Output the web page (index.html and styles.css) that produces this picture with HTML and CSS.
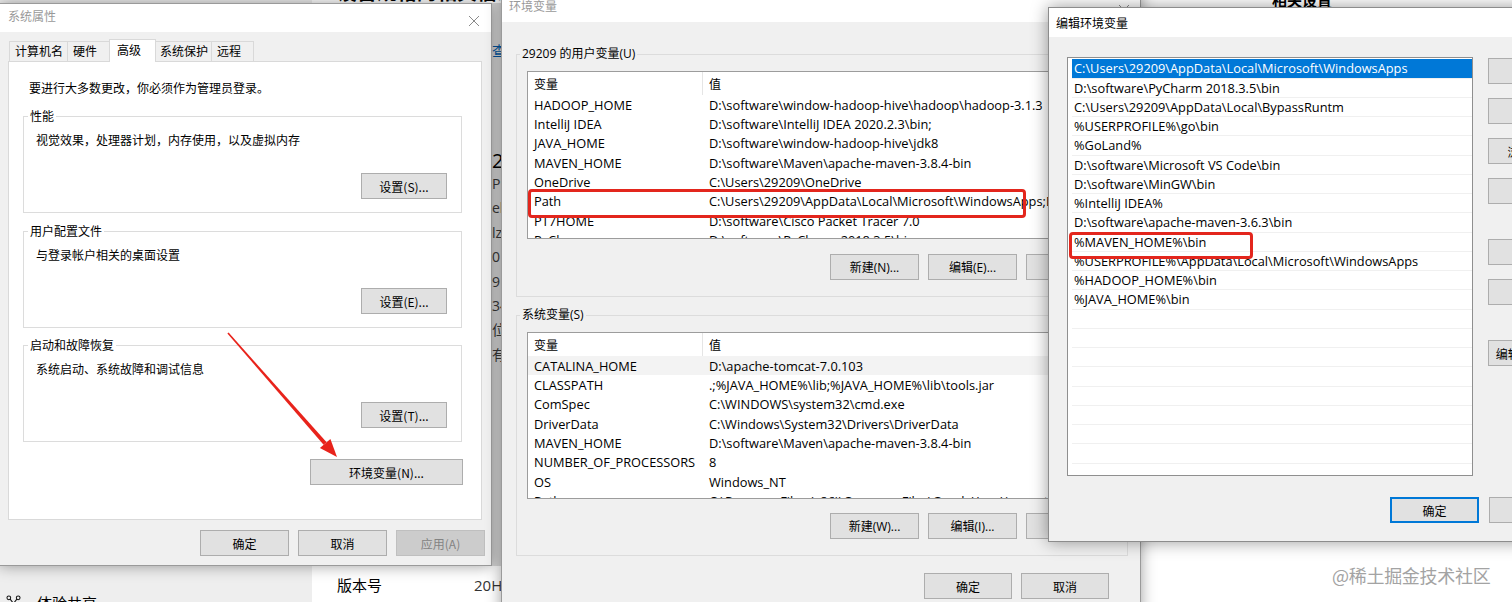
FILE: index.html
```html
<!DOCTYPE html>
<html lang="zh-CN">
<head>
<meta charset="utf-8">
<title>环境变量</title>
<link rel="stylesheet" href="styles.css">
</head>
<body>
<div class="desktop">
  <aside class="nav">
    <div class="nav-item">
      <svg class="nav-icon" viewBox="0 0 16 16"><circle cx="3" cy="3" r="2"/><circle cx="13" cy="3" r="2"/><path d="M4.4 4.4L8 9M11.6 4.4L8 9M8 9V13"/><circle cx="8" cy="15" r="2"/></svg>
      <span>体验共享</span>
    </div>
  </aside>

  <main class="settings">
    <div class="settings-main">
      <h1 class="settings-heading">设备规格的相关信息</h1>
      <div class="frag frag-link">查看</div>
      <div class="frag frag-big">2</div>
      <ul class="frag frag-list">
        <li>P</li><li>el</li><li>lz</li><li>0</li><li>9</li><li>34</li><li>位</li><li>有</li>
      </ul>
      <div class="spec-row"><span class="spec-label">版本号</span><span class="spec-value">20H2</span></div>
    </div>
    <div class="settings-side">
      <h2 class="side-heading">相关设置</h2>
    </div>
  </main>

  <!-- 系统属性 -->
  <section class="win win-sys">
    <header class="titlebar">
      <span class="title">系统属性</span>
      <svg class="close-icon" viewBox="0 0 10 10"><path d="M0 0L10 10M10 0L0 10"/></svg>
    </header>
    <div class="tabs">
      <span class="tab tab-name">计算机名</span>
      <span class="tab tab-hw">硬件</span>
      <span class="tab tab-adv tab-active">高级</span>
      <span class="tab tab-prot">系统保护</span>
      <span class="tab tab-remote">远程</span>
    </div>
    <div class="tab-panel">
      <p class="notice">要进行大多数更改，你必须作为管理员登录。</p>
      <fieldset class="group group-first">
        <legend>性能</legend>
        <p>视觉效果，处理器计划，内存使用，以及虚拟内存</p>
        <div class="group-actions"><button class="btn btn-set">设置(S)...</button></div>
      </fieldset>
      <fieldset class="group group-second">
        <legend>用户配置文件</legend>
        <p>与登录帐户相关的桌面设置</p>
        <div class="group-actions"><button class="btn btn-set">设置(E)...</button></div>
      </fieldset>
      <fieldset class="group group-third">
        <legend>启动和故障恢复</legend>
        <p>系统启动、系统故障和调试信息</p>
        <div class="group-actions"><button class="btn btn-set">设置(T)...</button></div>
      </fieldset>
      <div class="panel-actions"><button class="btn btn-env">环境变量(N)...</button></div>
    </div>
    <div class="dialog-actions sys-actions">
      <button class="btn">确定</button>
      <button class="btn">取消</button>
      <button class="btn" disabled>应用(A)</button>
    </div>
  </section>

  <!-- 环境变量 -->
  <section class="win win-env">
    <header class="titlebar titlebar-env">
      <span class="title">环境变量</span>
      <svg class="close-icon" viewBox="0 0 10 10"><path d="M0 0L10 10M10 0L0 10"/></svg>
    </header>
    <div class="env-body">
      <fieldset class="group env-group env-group-user">
        <legend>29209 的用户变量(U)</legend>
        <div class="list list-user">
          <div class="list-head"><span class="col-name">变量</span><span class="col-value">值</span></div>
          <div class="list-row"><span class="col-name">HADOOP_HOME</span><span class="col-value">D:\software\window-hadoop-hive\hadoop\hadoop-3.1.3</span></div>
          <div class="list-row"><span class="col-name">IntelliJ IDEA</span><span class="col-value">D:\software\IntelliJ IDEA 2020.2.3\bin;</span></div>
          <div class="list-row"><span class="col-name">JAVA_HOME</span><span class="col-value">D:\software\window-hadoop-hive\jdk8</span></div>
          <div class="list-row"><span class="col-name">MAVEN_HOME</span><span class="col-value">D:\software\Maven\apache-maven-3.8.4-bin</span></div>
          <div class="list-row"><span class="col-name">OneDrive</span><span class="col-value">C:\Users\29209\OneDrive</span></div>
          <div class="list-row row-marked"><span class="col-name">Path</span><span class="col-value">C:\Users\29209\AppData\Local\Microsoft\WindowsApps;D:\software\PyCharm 2018.3.5\bin;</span></div>
          <div class="list-row"><span class="col-name">PT7HOME</span><span class="col-value">D:\software\Cisco Packet Tracer 7.0</span></div>
          <div class="list-row"><span class="col-name">PyCharm</span><span class="col-value">D:\software\PyCharm 2018.3.5\bin;</span></div>
        </div>
        <div class="group-buttons">
          <button class="btn">新建(N)...</button>
          <button class="btn">编辑(E)...</button>
          <button class="btn">删除(D)</button>
        </div>
      </fieldset>
      <fieldset class="group env-group env-group-sys">
        <legend>系统变量(S)</legend>
        <div class="list list-sys">
          <div class="list-head"><span class="col-name">变量</span><span class="col-value">值</span></div>
          <div class="list-row row-hover"><span class="col-name">CATALINA_HOME</span><span class="col-value">D:\apache-tomcat-7.0.103</span></div>
          <div class="list-row"><span class="col-name">CLASSPATH</span><span class="col-value">.;%JAVA_HOME%\lib;%JAVA_HOME%\lib\tools.jar</span></div>
          <div class="list-row"><span class="col-name">ComSpec</span><span class="col-value">C:\WINDOWS\system32\cmd.exe</span></div>
          <div class="list-row"><span class="col-name">DriverData</span><span class="col-value">C:\Windows\System32\Drivers\DriverData</span></div>
          <div class="list-row"><span class="col-name">MAVEN_HOME</span><span class="col-value">D:\software\Maven\apache-maven-3.8.4-bin</span></div>
          <div class="list-row"><span class="col-name">NUMBER_OF_PROCESSORS</span><span class="col-value">8</span></div>
          <div class="list-row"><span class="col-name">OS</span><span class="col-value">Windows_NT</span></div>
          <div class="list-row"><span class="col-name">Path</span><span class="col-value">C:\Program Files (x86)\Common Files\Oracle\Java\javapath;</span></div>
        </div>
        <div class="group-buttons group-buttons-sys">
          <button class="btn">新建(W)...</button>
          <button class="btn">编辑(I)...</button>
          <button class="btn">删除(L)</button>
        </div>
      </fieldset>
      <div class="dialog-actions env-actions">
        <button class="btn btn-env-ok">确定</button>
        <button class="btn">取消</button>
      </div>
    </div>
  </section>

  <!-- 编辑环境变量 -->
  <section class="win win-edit">
    <header class="titlebar titlebar-edit">
      <span class="title">编辑环境变量</span>
    </header>
    <div class="edit-body">
      <div class="edit-main">
        <div class="edit-list">
          <div class="edit-row selected">C:\Users\29209\AppData\Local\Microsoft\WindowsApps</div>
          <div class="edit-row">D:\software\PyCharm 2018.3.5\bin</div>
          <div class="edit-row">C:\Users\29209\AppData\Local\BypassRuntm</div>
          <div class="edit-row">%USERPROFILE%\go\bin</div>
          <div class="edit-row">%GoLand%</div>
          <div class="edit-row">D:\software\Microsoft VS Code\bin</div>
          <div class="edit-row">D:\software\MinGW\bin</div>
          <div class="edit-row">%IntelliJ IDEA%</div>
          <div class="edit-row">D:\software\apache-maven-3.6.3\bin</div>
          <div class="edit-row row-marked-edit">%MAVEN_HOME%\bin</div>
          <div class="edit-row">%USERPROFILE%\AppData\Local\Microsoft\WindowsApps</div>
          <div class="edit-row">%HADOOP_HOME%\bin</div>
          <div class="edit-row">%JAVA_HOME%\bin</div>
          <div class="edit-row"></div>
          <div class="edit-row"></div>
          <div class="edit-row"></div>
          <div class="edit-row"></div>
          <div class="edit-row"></div>
          <div class="edit-row"></div>
          <div class="edit-row"></div>
          <div class="edit-row"></div>
          <div class="edit-row"></div>
        </div>
        <div class="edit-buttons">
          <button class="btn">新建(N)</button>
          <button class="btn">编辑(E)</button>
          <button class="btn">浏览(B)...</button>
          <button class="btn">删除(D)</button>
          <button class="btn btn-sep">上移(U)</button>
          <button class="btn">下移(O)</button>
          <button class="btn btn-sep">编辑文本(T)...</button>
        </div>
      </div>
      <div class="edit-actions">
        <button class="btn btn-default">确定</button>
        <button class="btn">取消</button>
      </div>
    </div>
  </section>

  <svg class="arrow" viewBox="0 0 130 140">
    <polygon points="8.6,7.5 106.6,117.2 103.6,119.8 7.4,8.5"/>
    <polygon points="117,132 99.9,123.1 110.4,113.9"/>
  </svg>

  <div class="watermark">@稀土掘金技术社区</div>
</div>
</body>
</html>
```

FILE: styles.css
```css
* {
  box-sizing: border-box;
  margin: 0;
  padding: 0;
}

html,
body {
  width: 1512px;
  height: 602px;
  overflow: hidden;
}

body {
  font-family: "Open Sans", "Noto Sans CJK SC", sans-serif;
  font-size: 12px;
  color: #000;
  background: #fff;
}

.desktop {
  position: relative;
  display: flex;
  width: 1512px;
  height: 602px;
  overflow: hidden;
}

/* ---------- background settings page ---------- */
.nav {
  width: 312px;
  flex: none;
  background: #eeeeee;
  display: flex;
  flex-direction: column;
  justify-content: flex-end;
}

.nav-item {
  display: flex;
  align-items: center;
  gap: 16px;
  height: 24px;
  margin-bottom: -12px;
  padding-left: 6px;
  font-family: "Noto Sans CJK SC", sans-serif;
  font-size: 15px;
}

.nav-icon {
  width: 15px;
  height: 15px;
  fill: none;
  stroke: #111;
  stroke-width: 1.1;
}

.settings {
  flex: 1;
  display: flex;
  background: #fff;
}

.settings-main {
  width: 960px;
  flex: none;
  padding-left: 25px;
  display: flex;
  flex-direction: column;
  font-family: "Noto Sans CJK SC", sans-serif;
}

.settings-heading {
  font-size: 20px;
  font-weight: 700;
  line-height: 24px;
  height: 24px;
  margin-top: -20px;
  white-space: nowrap;
}

.frag {
  margin-left: 155px;
  list-style: none;
  color: #333;
}

.frag-link {
  margin-top: 39px;
  font-size: 14px;
  line-height: 14px;
  color: #0067c0;
}

.frag-big {
  margin-top: 96px;
  font-family: "Open Sans", sans-serif;
  font-size: 20px;
  line-height: 16px;
  color: #000;
}

.frag-list {
  margin-top: 3px;
  font-family: "Open Sans", "Noto Sans CJK SC", sans-serif;
  font-size: 14px;
  line-height: 24.4px;
  color: #444;
}

.spec-row {
  margin-top: auto;
  margin-bottom: 7px;
  display: flex;
  font-size: 15px;
  line-height: 20px;
}

.spec-label {
  width: 137px;
}

.spec-value {
  color: #333;
  font-family: "Open Sans", sans-serif;
}

.settings-side {
  flex: 1;
}

.side-heading {
  font-family: "Noto Sans CJK SC", sans-serif;
  font-size: 15px;
  font-weight: 700;
  line-height: 16px;
  margin-top: -8px;
}

/* ---------- windows ---------- */
.win {
  position: absolute;
  display: flex;
  flex-direction: column;
  background: #f0f0f0;
  border: 1px solid #9a9a9a;
  box-shadow: 0 0 14px rgba(0, 0, 0, 0.38);
}

.titlebar {
  background: #fff;
  display: flex;
  justify-content: space-between;
  align-items: flex-start;
  flex: none;
}

.title {
  color: #999;
  line-height: 14px;
  font-family: "Noto Sans CJK SC", sans-serif;
}

.close-icon {
  width: 10px;
  height: 10px;
  fill: none;
  stroke: #8a8a8a;
  stroke-width: 1;
}

.btn {
  width: 89px;
  height: 26px;
  flex: none;
  border: 1px solid #adadad;
  background: #e1e1e1;
  font: inherit;
  color: #000;
  display: inline-flex;
  align-items: center;
  justify-content: center;
  white-space: nowrap;
}

.btn:disabled {
  background: #cccccc;
  border-color: #bfbfbf;
  color: #838383;
}

.dialog-actions {
  display: flex;
  justify-content: flex-end;
  gap: 9px;
}

.group {
  border: 1px solid #dcdcdc;
  min-width: 0;
}

.group legend {
  line-height: 16px;
  padding: 0 2px;
}

/* 系统属性 */
.win-sys {
  left: -1px;
  top: 3px;
  width: 493px;
  height: 563px;
  z-index: 1;
  font-family: "Noto Sans CJK SC", sans-serif;
  box-shadow: 0 0 14px rgba(0, 0, 0, 0.38), 10px 0 0 rgba(0, 0, 0, 0.14);
}

.win-sys .titlebar {
  height: 28px;
  padding: 5px 12px 0 8px;
}

.win-sys .close-icon {
  margin-top: 7px;
}

.tabs {
  display: flex;
  align-items: flex-end;
  height: 22px;
  margin: 7px 0 0 9px;
  position: relative;
  z-index: 1;
}

.tab {
  height: 20px;
  line-height: 18px;
  padding-left: 5px;
  border: 1px solid #d9d9d9;
  border-bottom: none;
  background: #f0f0f0;
  margin-right: -1px;
  white-space: nowrap;
}

.tab-name { width: 59px; }
.tab-hw { width: 43px; }
.tab-adv { width: 47px; padding-left: 7px; }
.tab-prot { width: 57px; padding-left: 4px; }
.tab-remote { width: 43px; }

.tab-active {
  height: 23px;
  margin-bottom: -1px;
  background: #fff;
  line-height: 20px;
}

.tab-panel {
  margin: 0 9px 0 8px;
  height: 459px;
  background: #fff;
  border: 1px solid #d9d9d9;
  padding: 18px 19px 0 14px;
  display: flex;
  flex-direction: column;
}

.notice {
  line-height: 16px;
  padding-left: 6px;
}

.tab-panel .group {
  padding: 8px 14px 13px 12px;
}

.tab-panel .group legend {
  margin-left: -8px;
}

.tab-panel .group p {
  line-height: 16px;
}

.group-first { margin-top: 12px; }
.group-second { margin-top: 10px; }
.group-third { margin-top: 9px; }

.group-actions {
  display: flex;
  justify-content: flex-end;
  margin-top: 25px;
}

.btn-set {
  width: 86px;
}

.panel-actions {
  display: flex;
  justify-content: flex-end;
  margin-top: 17px;
  margin-right: -1px;
}

.btn-env {
  width: 153px;
}

.sys-actions {
  margin-top: 10px;
  padding-right: 6px;
}

/* 环境变量 */
.win-env {
  left: 501px;
  top: -12px;
  width: 640px;
  height: 640px;
  z-index: 2;
}

.titlebar-env {
  height: 33px;
  padding: 10px 11px 0 7px;
}

.titlebar-env .close-icon {
  margin-top: 6px;
}

.env-body {
  padding: 0 12px 0 14px;
  display: flex;
  flex-direction: column;
}

.env-group {
  padding: 9px 12px 16px 10px;
  font-family: "Open Sans", "Noto Sans CJK SC", sans-serif;
}

.env-group legend {
  margin-left: -7px;
}

.env-group-user { margin-top: 24px; }
.env-group-sys { margin-top: 10px; }

.list {
  background: #fff;
  border: 1px solid #9c9c9c;
  overflow: hidden;
  font-size: 12.8px;
}

.list-user { height: 168px; }
.list-sys { height: 167px; }

.list-head {
  display: flex;
  height: 23px;
  font-family: "Noto Sans CJK SC", sans-serif;
  font-size: 12px;
}

.list-head .col-name {
  border-right: 1px solid #e5e5e5;
}

.list-head span {
  display: flex;
  align-items: center;
}

.col-name {
  width: 175px;
  flex: none;
  padding-left: 6px;
}

.col-value {
  padding-left: 6px;
  white-space: nowrap;
}

.list-row {
  display: flex;
  align-items: center;
  height: 19.33px;
  white-space: nowrap;
}

.row-hover {
  background: #f3f3f3;
}

.row-marked {
  position: relative;
}

.row-marked::after {
  content: "";
  position: absolute;
  left: 0;
  top: -3px;
  width: 492px;
  height: 23px;
  border: 3px solid #e3261d;
  border-radius: 4px;
}

.group-buttons {
  display: flex;
  justify-content: flex-end;
  gap: 9px;
  margin-top: 15px;
}

.group-buttons-sys {
  margin-top: 14px;
}

.env-actions {
  margin-top: 17px;
  padding-right: 19px;
  font-family: "Noto Sans CJK SC", sans-serif;
}

.env-actions .btn {
  width: 88px;
}

/* 编辑环境变量 */
.win-edit {
  left: 1048px;
  top: 7px;
  width: 560px;
  height: 535px;
  z-index: 3;
  border-color: #8c8c8c;
  box-shadow: 0 0 16px rgba(0, 0, 0, 0.4);
}

.titlebar-edit {
  height: 29px;
  padding-left: 7px;
  align-items: center;
}

.titlebar-edit .title {
  color: #000;
}

.edit-body {
  padding: 20px 0 0 18px;
  display: flex;
  flex-direction: column;
}

.edit-main {
  display: flex;
  gap: 15px;
}

.edit-list {
  width: 406px;
  height: 419px;
  flex: none;
  border: 1px solid #8f8f8f;
  background: #fff;
  padding-top: 1.4px;
  overflow: hidden;
  font-size: 12.8px;
}

.edit-row {
  height: 19.25px;
  margin-left: 4px;
  padding-left: 2px;
  border-bottom: 1px solid #f0f0f0;
  line-height: 18.25px;
  white-space: nowrap;
}

.edit-row.selected {
  background: #0078d7;
  color: #fff;
}

.row-marked-edit {
  position: relative;
}

.row-marked-edit::after {
  content: "";
  position: absolute;
  left: -3px;
  top: -1px;
  width: 178px;
  height: 21px;
  border: 3px solid #e3261d;
  border-radius: 4px;
}

.edit-buttons {
  display: flex;
  flex-direction: column;
  gap: 14px;
  padding-top: 1px;
  font-family: "Noto Sans CJK SC", sans-serif;
}

.btn-sep {
  margin-top: 21px;
}

.edit-actions {
  display: flex;
  gap: 10px;
  margin-top: 21px;
  margin-left: 323px;
  font-family: "Noto Sans CJK SC", sans-serif;
}

.btn-default {
  border-color: #0078d7;
  box-shadow: inset 0 0 0 1px #0078d7;
}

/* ---------- overlays ---------- */
.arrow {
  position: absolute;
  left: 220px;
  top: 325px;
  width: 130px;
  height: 140px;
  z-index: 5;
  fill: #e8231b;
}

.watermark {
  position: absolute;
  left: 1332px;
  top: 564px;
  z-index: 6;
  font-family: "Noto Sans CJK SC", sans-serif;
  font-size: 18px;
  line-height: 22px;
  color: #a3a3a3;
  letter-spacing: -0.3px;
  white-space: nowrap;
}
```
